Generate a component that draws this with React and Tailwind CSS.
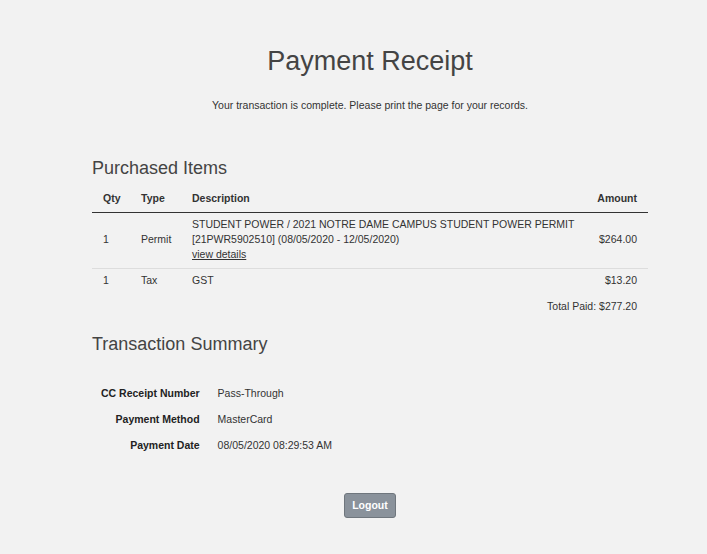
const items = [
  {
    qty: '1',
    type: 'Permit',
    lines: [
      'STUDENT POWER / 2021 NOTRE DAME CAMPUS STUDENT POWER PERMIT',
      '[21PWR5902510] (08/05/2020 - 12/05/2020)',
    ],
    link: 'view details',
    amount: '$264.00',
  },
  { qty: '1', type: 'Tax', lines: ['GST'], amount: '$13.20' },
];

const summary = [
  ['CC Receipt Number', 'Pass-Through'],
  ['Payment Method', 'MasterCard'],
  ['Payment Date', '08/05/2020 08:29:53 AM'],
];

const ItemsTable = () => (
  <table className="w-full table-fixed border-collapse text-[10.5px] leading-[15px] text-[#333]">
    <colgroup>
      <col className="w-[38px]" />
      <col className="w-[51px]" />
      <col />
      <col className="w-[54px]" />
    </colgroup>
    <thead>
      <tr className="border-b border-[#333]">
        <th className="pl-[11px] pr-[4px] pt-[6px] pb-[6px] text-left font-bold">Qty</th>
        <th className="pl-[11px] pr-[4px] pt-[6px] pb-[6px] text-left font-bold">Type</th>
        <th className="pl-[11px] pr-[4px] pt-[6px] pb-[6px] text-left font-bold">Description</th>
        <th className="pl-[2px] pr-[11px] pt-[6px] pb-[6px] text-right font-bold">Amount</th>
      </tr>
    </thead>
    <tbody>
      {items.map((item, i) => (
        <tr
          key={i}
          className={i === 0 ? 'border-b border-[#ddd]' : ''}
        >
          <td className={`pl-[11px] pr-[4px] align-middle ${i === 0 ? 'pt-[4px] pb-[6px]' : 'pt-[4px] pb-[5px]'}`}>
            {item.qty}
          </td>
          <td className={`pl-[11px] pr-[4px] align-middle ${i === 0 ? 'pt-[4px] pb-[6px]' : 'pt-[4px] pb-[5px]'}`}>
            {item.type}
          </td>
          <td className={`pl-[11px] pr-[2px] align-middle ${i === 0 ? 'pt-[4px] pb-[6px]' : 'pt-[4px] pb-[5px]'}`}>
            {item.lines.map((line) => (
              <div key={line}>{line}</div>
            ))}
            {item.link && (
              <a href="#" className="text-[#333] underline">
                {item.link}
              </a>
            )}
          </td>
          <td className={`pl-[2px] pr-[11px] text-right align-middle ${i === 0 ? 'pt-[4px] pb-[6px]' : 'pt-[4px] pb-[5px]'}`}>
            {item.amount}
          </td>
        </tr>
      ))}
      <tr>
        <td colSpan={4} className="px-[11px] pt-[6px] pb-[5px] text-right">
          Total Paid: $277.20
        </td>
      </tr>
    </tbody>
  </table>
);

const SummaryTable = () => (
  <table className="border-collapse text-[10.5px] leading-[15px] text-[#333]">
    <tbody>
      {summary.map(([label, value]) => (
        <tr key={label} className="h-[26px]">
          <td className="px-[9px] text-right align-middle font-bold text-[#222]">{label}</td>
          <td className="px-[9px] text-left align-middle">{value}</td>
        </tr>
      ))}
    </tbody>
  </table>
);

export default function App() {
  return (
    <div className="min-h-[554px] w-full bg-[#f2f2f2] font-['Liberation_Sans',Arial,sans-serif]">
      <div className="ml-[92px] flex w-[556px] flex-col pt-[46px] pb-[36px]">
        <h1 className="text-center text-[27px] leading-[31px] font-normal text-[#444]">
          Payment Receipt
        </h1>
        <p className="mt-[21px] text-center text-[10.5px] leading-[15px] text-[#333]">
          Your transaction is complete. Please print the page for your records.
        </p>

        <h2 className="mt-[45px] text-[18px] leading-[20px] font-normal text-[#444]">
          Purchased Items
        </h2>
        <div className="mt-[7px]">
          <ItemsTable />
        </div>

        <h2 className="mt-[15px] text-[18px] leading-[20px] font-normal text-[#444]">
          Transaction Summary
        </h2>
        <div className="mt-[26px]">
          <SummaryTable />
        </div>

        <div className="mt-[35px] flex justify-center">
          <button
            type="button"
            className="h-[25px] w-[52px] rounded-[3px] border border-[#6f767d] bg-[#8a929b] text-[10.5px] font-bold text-white"
          >
            Logout
          </button>
        </div>
      </div>
    </div>
  );
}
